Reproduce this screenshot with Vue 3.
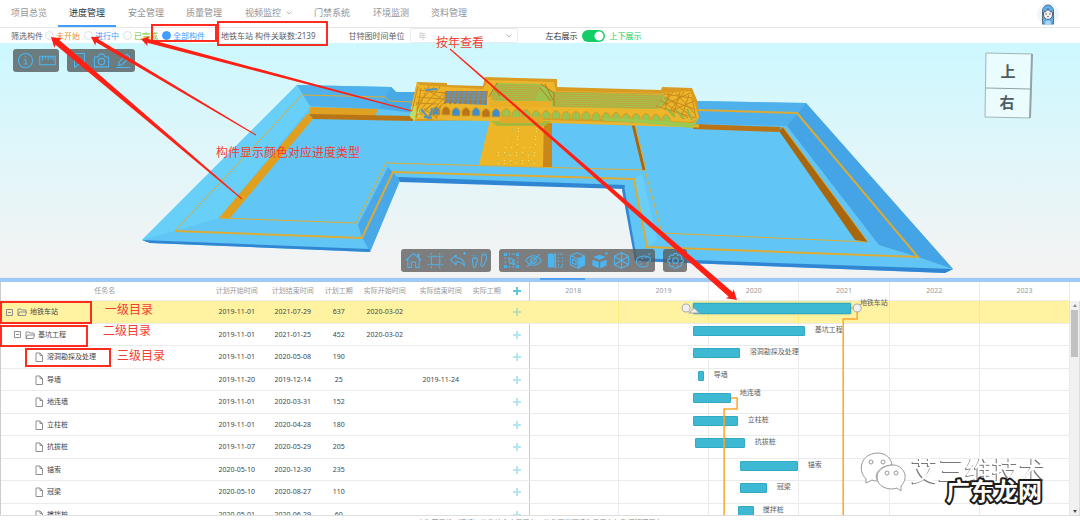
<script setup>
import { ref } from 'vue'

const nav = ['项目总览', '进度管理', '安全管理', '质量管理', '视频监控', '门禁系统', '环境监测', '资料管理']
const states = [
  { id: 'todo', text: '未开始' },
  { id: 'doing', text: '进行中' },
  { id: 'done', text: '已完成' },
  { id: 'all', text: '全部构件' }
]
const state = ref('all')
const unit = ref('年')
const stacked = ref(true)

const years = [2018, 2019, 2020, 2021, 2022, 2023]
const tasks = [
  { name: '地铁车站', level: 0, start: '2019-11-01', end: '2021-07-29', days: 637, real: '2020-03-02', x: 164, w: 158, label: 331 },
  { name: '基坑工程', level: 1, start: '2019-11-01', end: '2021-01-25', days: 452, real: '2020-03-02', x: 164, w: 112, label: 286 },
  { name: '溶洞勘探及处理', level: 2, start: '2019-11-01', end: '2020-05-08', days: 190, x: 164, w: 47, label: 221 },
  { name: '导墙', level: 2, start: '2019-11-20', end: '2019-12-14', days: 25, realEnd: '2019-11-24', x: 169, w: 6, label: 185 },
  { name: '地连墙', level: 2, start: '2019-11-01', end: '2020-03-31', days: 152, x: 164, w: 38, label: 211 },
  { name: '立柱桩', level: 2, start: '2019-11-01', end: '2020-04-28', days: 180, x: 164, w: 45, label: 219 },
  { name: '抗拔桩', level: 2, start: '2019-11-07', end: '2020-05-29', days: 205, x: 166, w: 50, label: 226 },
  { name: '锚索', level: 2, start: '2020-05-10', end: '2020-12-30', days: 235, x: 211, w: 58, label: 279 },
  { name: '冠梁', level: 2, start: '2020-05-10', end: '2020-08-27', days: 110, x: 211, w: 27, label: 248 },
  { name: '搅拌桩', level: 2, start: '2020-05-01', end: '2020-06-29', days: 60, x: 209, w: 16, label: 234 }
]

const icons = {
  info: 'M12 2a10 10 0 1 0 0 20a10 10 0 0 0 0-20M12 6v2M9.500 11h3v6M9 17h6',
  ruler: 'M1 6h22v12h-22zM5 6v6M9 6v4M13 6v6M17 6v4M20 6v6',
  mark: 'M5 2h14v20l-7-6l-7 6z',
  camera: 'M2 7h5l2-4h6l2 4h5v14h-20zM12 9a4.500 4.500 0 1 0 0 9a4.500 4.500 0 0 0 0-9',
  pen: 'M2 22h20M5 19l1-5l11-11l4 4l-11 11zM14 6l4 4',
  home: 'M1 12l11-10l11 10M4 10v12h5v-8h6v8h5v-12M18 7v-4h2v6',
  crop: 'M6 1v3M18 1v3M6 20v3M18 20v3M1 6h3M20 6h3M1 18h3M20 18h3M6 6h12v12h-12z',
  undo: 'M10 4l-8 7l8 7v-4c6-1 9 1 12 6c0-7-4-12-12-12zM20 2h4M22 0v4',
  feet: 'M2 12c0-5 8-5 7 0c0 3-2 4-2 7c0 4-4 4-4 0c0-3-1-4-1-7M15 7c0-5 7-5 7 1c0 4-2 5-4 10c-1 4-5 2-4-1c1-4 1-6 1-10M2 6v-1M5 5v-1M8 6v-1M15 1v1M18 0v1M22 1v1'  ,
  pick: 'M2 2h3v3h-3zM19 2h3v3h-3zM2 19h3v3h-3zM19 19h3v3h-3zM7 3h3M13 3h3M7 21h3M13 21h3M3 7v3M3 13v3M21 7v3M21 13v3M8 8l9 4l-4 1l4 4l-2 1l-3-3l-2 2z',
  hide: 'M1 12c6-9 16-9 22 0c-6 9-16 9-22 0M12 8a4 4 0 1 0 0 8a4 4 0 0 0 0-8M3 21l18-18',
  gear: 'M10 2h4l1 3l3-1l3 3l-1 3l3 1v3l-3 1l1 3l-3 3l-3-1l-1 3h-4l-1-3l-3 1l-3-3l1-3l-3-1v-3l3-1l-1-3l3-3l3 1zM12 8a4 4 0 1 0 0 8a4 4 0 0 0 0-8',
  cube: 'M12 1l10 5v12l-10 5l-10-5v-12zM2 6l10 6l10-6M12 12v11M12 1v11l-10 6M12 12l10 6',
  paint: 'M2 13c0-8 16-10 20-3c1 3-4 2-4 5c0 3 2 5-4 6c-6 1-12-2-12-8M6 13h2M9 9h2M14 8h2M7 17h3M19 4l2-2'
}
const iconFills = {
  split: ['M2 3h8v18h-8z', 'M12 1v22M15 3h2M19 3h3M22 7v2M22 12v2M22 17v2M15 21h2M19 21h3M16 7v2M16 12v2M16 17v2'],
  box: ['M13 10l9-4v12l-9 5z', 'M2 5l10-4l10 5l-9 4v13l-11-5zM13 10l-11-5M5 10l5 2v6l-5-2z'],
  open: ['M2 11l9 3v9l-9-4zM13 14l9-3v8l-9 4zM3 7l9-3l9 3l-9 4z', 'M20 2h4M22 0v4']
}
const topTools = [['info', 'ruler'], ['mark', 'camera', 'pen']]
const bottomTools = [['home', 'crop', 'undo', 'feet'], ['pick', 'hide', 'split', 'box', 'open', 'cube', 'paint'], ['gear']]

// Tapered arrow from a thin tail to a wide head
function arrow(tx, ty, x, y, shaft, head) {
  const len = Math.hypot(x - tx, y - ty)
  const ux = (x - tx) / len
  const uy = (y - ty) / len
  const at = (d, o) => `${(x - ux * d - uy * o).toFixed(1)},${(y - uy * d + ux * o).toFixed(1)}`
  return [at(0, 0), at(head * 1.6, head), at(head * 1.4, shaft), at(len, 0.5), at(len, -0.5), at(head * 1.4, -shaft), at(head * 1.6, -head)].join(' ')
}
const arrows = [
  arrow(242, 199, 51, 37, 3, 6),
  arrow(256, 135, 91, 37, 2, 5),
  arrow(412, 111, 141, 39, 2, 5),
  arrow(450, 49, 737, 300, 3, 6)
]

const arches = Array.from({ length: 24 }, (_, i) => ({ x: 436 + i * 10, y: 106 + Math.round(i * 0.35), c: i < 7 ? (i % 2 ? '#b87518' : '#3d8fcb') : '#98c452' }))
const stripes = Array.from({ length: 9 }, (_, i) => 447 + i * 5)
const beams = Array.from({ length: 8 }, (_, i) => i)
const dots = []
for (let r = 0; r < 10; r++) {
  for (let c = 0; c < 7; c++) {
    if (r > 4 || c === 2 || c === 3 || c === 6) dots.push({ x: 500 + c * 6 - Math.round(r / 4), y: 128 + r * 4 - (r % 2) })
  }
}
</script>

<template>
  <div class="page">
    <header class="top">
      <nav>
        <a v-for="(n, i) in nav" :key="n" href="#" :class="{ active: i === 1 }">{{ n }}<svg v-if="i === 4" class="chev" viewBox="0 0 6 4"><path d="M0.500 0.500l2.500 2.500l2.500-2.500" /></svg></a>
      </nav>
      <button class="avatar" aria-label="用户">
        <svg viewBox="0 0 24 24">
          <circle cx="12" cy="12" r="12" fill="#f0f7fd" />
          <path d="M6 23V9c0-9 12-9 12 0v14z" fill="#62aee8" stroke="#4c6680" />
          <path d="M7 10c2 0 4-1 5-4c1 3 3 4 5 4v2c0 8-10 8-10 0z" fill="#f6f1ee" stroke="#4c5a6c" />
          <path d="M8 24l2-5h4l2 5z" fill="#a9d7fa" /><path d="M9 12h2M13 12h2M11 15h2" stroke="#4c5a6c" />
        </svg>
      </button>
    </header>

    <section class="filters">
      <span>筛选构件</span>
      <div class="radios">
        <label v-for="s in states" :key="s.id" :class="s.id"><input v-model="state" type="radio" name="state" :value="s.id" />{{ s.text }}</label>
      </div>
      <span class="count">地铁车站 构件关联数:2139</span>
      <label class="unit" for="unit">甘特图时间单位</label>
      <div class="select">
        <select id="unit" v-model="unit"><option>年</option><option>月</option></select>
        <svg class="chev" viewBox="0 0 6 4"><path d="M0.500 0.500l2.500 2.500l2.500-2.500" /></svg>
      </div>
      <label class="switch"><b>左右展示</b><input v-model="stacked" type="checkbox" role="switch" /><em>上下展示</em></label>
    </section>

    <section class="viewer">
      <svg class="scene" viewBox="0 43 1080 234" preserveAspectRatio="xMidYMid slice">
        <polygon points="142,240 297,85 391,87 396,92 415,92 700,101 806,103 953,269 945,273 637,261 624,188 400,181 370,252 150,243" fill="#61c6f5" />
        <polygon points="142,240 297,85 311,106 219,218 175,231" fill="#68cff8" />
        <polygon points="297,85 391,87 396,92 415,92 415,113 378,109 310,106" fill="#4fb2ec" />
        <polygon points="391,87 385,97 380,108 415,113 415,92 396,92" fill="#48a9e7" />
        <polygon points="695,101 806,103 787,126 695,124" fill="#4eb1ec" />
        <polygon points="806,103 953,269 918,257 879,245 787,126" fill="#45a4e5" />
        <polygon points="388,167 400,180 370,252 362,237 358,225" fill="#49a8e8" />
        <polygon points="634,179 642,174 657,240 647,247" fill="#69cff8" />
        <g fill="#3186d3">
          <polygon points="142,240 369,249 370,252 150,243" />
          <polygon points="398,177 625,185 624,189 400,182" />
          <polygon points="624,185 637,259 635,261 622,190" />
          <polygon points="635,258 953,269 945,273 635,261" />
        </g>
        <g fill="none" stroke="#dcab35">
          <path d="M412 102l-22-1l-5-4l-83-2l-127 136" /><path d="M175 231l187 7l31-66l241 7l13 68l271 10l-121-144l-100-3" stroke-width="2" />
          <path d="M219 218l137 5l30-60l259 7l17 63l206 9" />
        </g>
        <polygon points="310,107 378,109 375,117 309,114" fill="#e0a122" />
        <polygon points="309,114 413,116 413,121 313,119" fill="#b97515" />
        <polygon points="308,113 313,119 230,218 219,218" fill="#e0a01e" />
        <polygon points="693,124 781,127 779,132 693,129" fill="#b97515" />
        <polygon points="779,131 783,127 868,242 855,240" fill="#a8660f" />
        <path d="M783 127L868 242" stroke="#d9a62e" />
        <path d="M632 120L644 170" stroke="#a8660f" stroke-width="3" /><path d="M634 120L646 170" stroke="#e3ab28" />
        <polygon points="490,120 544,123 543,167 479,165" fill="#edb627" />
        <polygon points="544,122 552,122 552,167 543,167" fill="#c88718" />
        <rect v-for="(d, i) in dots" :key="'d' + i" :x="d.x" :y="d.y" width="1" height="1" :fill="i % 3 ? '#f8df75' : '#aabf55'" />
        <polygon points="417,82 447,83 447,85 483,86 485,77 557,79 557,87 661,90 662,87 692,88 697,100 699,118 693,128 630,122 552,122 544,125 495,123 490,120 415,121 411,108" fill="#d99b20" />
        <polygon points="417,82 420,85 447,87 483,89 488,80 554,82 556,91 661,93 690,91 695,104 699,118 691,122 630,119 415,119 411,108" fill="#edb52a" />
        <polygon points="445,91 487,91 487,105 445,103" fill="#5992bb" />
        <path v-for="s in stripes" :key="s" :d="`M${s} 91l-2 13`" stroke="#b97821" stroke-width="2" />
        <path d="M443 93h44M443 96h44M443 99h44" stroke="#80939d" />
        <polygon points="497,83 541,84 554,92 663,95 670,100 658,109 552,107 550,102 494,101 490,94" fill="#9fc44d" />
        <path v-for="b in beams" :key="'b' + b" :d="`M${497 - b} ${85 + b * 2}l45 1M553 ${92 + b * 2}l${112 - b} 2`" stroke="#c5a23b" />
        <path d="M541 84l13 9l0 13M545 84l8 16M540 88l12 14M490 84l10 12M497 83l-8 14" stroke="#b87719" fill="none" />
        <path d="M490 101h62v6h-62z" fill="#e9af26" />
        <path v-for="a in arches" :key="a.x" :d="`M${a.x - 4} ${a.y + 9}v-5q4-7 8 0v5z`" :fill="a.c" stroke="#d99b20" />
        <path d="M434 118l265 8" stroke="#e9b52f" stroke-width="3" />
        <path d="M604 118l28 1l61 4l6-6l-6 11l-63-6l-26-1z" fill="#9cc94e" />
        <path d="M491 121h60l-6 5h-48z" fill="#a4b83b" /><path d="M500 117h43v6h-43z" fill="#e2a929" />
        <path d="M411 107l5-1l-1 15l-5-4zM414 113l8-5l-3 10z" fill="#bede64" />
        <g fill="none" stroke="#c98a1c">
          <path d="M418 86l-6 25M421 88l-5 30M429 86l-12 24M440 87l-21 25M446 91l-25 24M446 96l-20 22M446 101l-18 16M419 90l26 3M417 97l25 2M416 103l22 1M424 109l13 9M441 105l-5 14M416 116l18-13M434 87l-18 18M424 88l20 12" />
          <path d="M664 94l28 4l4 20M666 97l25 19M676 93l18 20M660 100l28 18M690 93l-26 12M694 101l-23 10M669 92l-4 18M680 92l-7 24M689 95l-8 23M656 106l39 12M664 98l30 11M673 92l-12 16M684 92l-15 20" />
        </g>
        <path d="M421 109l8 10M432 108l-2 10M426 90l11-1M424 117l8 1" stroke="#5196bd" stroke-width="2" />
        <path d="M676 110l8 9M687 109l5 11M666 108l9 9" stroke="#95b747" stroke-width="2" />

        <g class="cube">
          <polygon points="986,53 1032,54 1030,118 985,117" />
          <path d="M986 88L1031 89" /><path d="M1032 54L1030 118" stroke-width="2" />
          <text x="1008" y="77">上</text><text x="1007" y="108">右</text>
        </g>
      </svg>

      <div class="tools upper">
        <div v-for="(g, i) in topTools" :key="i" class="group">
          <button v-for="k in g" :key="k" :aria-label="k"><svg viewBox="0 0 24 24"><path :d="icons[k]" /></svg></button>
        </div>
      </div>
      <div class="tools lower">
        <div v-for="(g, i) in bottomTools" :key="i" class="group">
          <button v-for="k in g" :key="k" :aria-label="k">
            <svg viewBox="0 0 24 24">
              <path v-if="icons[k]" :d="icons[k]" />
              <template v-else><path class="solid" :class="k" :d="iconFills[k][0]" /><path :d="iconFills[k][1]" /></template>
            </svg>
          </button>
        </div>
      </div>
    </section>

    <div class="splitter"><i></i></div>

    <main class="gantt">
      <div class="grid">
        <table>
          <colgroup><col /><col class="date" /><col class="date" /><col class="num" /><col class="date" /><col class="date" /><col class="num" /><col class="add" /></colgroup>
          <thead>
            <tr>
              <th>任务名</th><th>计划开始时间</th><th>计划结束时间</th><th>计划工期</th><th>实际开始时间</th><th>实际结束时间</th><th>实际工期</th>
              <th><button class="plus" aria-label="新增任务"><svg viewBox="0 0 8 8"><path d="M4 0v8M0 4h8" /></svg></button></th>
            </tr>
          </thead>
          <tbody>
            <tr v-for="(t, i) in tasks" :key="i" :class="{ picked: i === 0 }">
              <td>
                <div class="name" :class="'l' + t.level">
                  <svg class="box" viewBox="0 0 7 7"><path v-if="t.level < 2" d="M0.500 0.500h6v6h-6zM2 3.500h3" /></svg>
                  <svg class="node" viewBox="0 0 10 10">
                    <path v-if="t.level < 2" d="M1 8V2h3l1 1h4v2M1 8.500l1.500-3.500h7L8.500 8.500z" />
                    <path v-else d="M2 1h4l2.500 2.500V9.500H2zM6 1v2.500h2.500" />
                  </svg>{{ t.name }}
                </div>
              </td>
              <td>{{ t.start }}</td><td>{{ t.end }}</td><td>{{ t.days }}</td><td>{{ t.real }}</td><td>{{ t.realEnd }}</td><td></td>
              <td><button class="plus" aria-label="新增子任务"><svg viewBox="0 0 8 8"><path d="M4 0v8M0 4h8" /></svg></button></td>
            </tr>
          </tbody>
        </table>
      </div>

      <div class="timeline">
        <div class="years"><span v-for="y in years" :key="y">{{ y }}</span></div>
        <div class="lanes">
          <div v-for="(t, i) in tasks" :key="i" class="lane" :class="{ picked: i === 0 }">
            <span v-for="y in years" :key="y" class="cell"></span>
          </div>
          <template v-for="(t, i) in tasks" :key="'t' + i">
            <i class="bar" :class="{ root: i === 0 }" :style="{ left: t.x / 5.41 + '%', width: t.w / 5.41 + '%', top: Math.ceil(i * 22.5) + 2 + 'px' }"></i>
            <span class="tag" :style="{ left: t.label / 5.41 + '%', top: Math.ceil(i * 22.5) + (i === 0 || i === 4 ? -3 : 1) + 'px' }">{{ t.name }}</span>
          </template>
          <svg class="links" viewBox="0 0 541 214" preserveAspectRatio="xMinYMin slice">
            <path d="M322 7h6v11h-14v196M202 97h6v11h-13v106" />
            <g class="knob"><circle cx="157" cy="7" r="4" /><circle cx="328" cy="7" r="4" /><path d="M160 12l5-5l5 5z" /></g>
          </svg>
        </div>
      </div>
      <div class="scroll"><i class="up"></i><i class="thumb"></i><i class="down"></i></div>
    </main>
    <footer>上海艾三维（建设）软件综合应用平台，软件开发环境为云平台与数据管理平台</footer>

    <svg class="notes" viewBox="0 0 1080 520" preserveAspectRatio="xMinYMin meet">
      <g class="frames">
        <rect x="152" y="25" width="64" height="16" /><rect x="218" y="22" width="109" height="23" />
        <rect x="1" y="302" width="90" height="21" /><rect x="1" y="326" width="86" height="20" /><rect x="26" y="349" width="84" height="17" />
      </g>
      <polygon v-for="a in arrows" :key="a" :points="a" fill="#ff2015" />
      <g class="words">
        <text x="436" y="47">按年查看</text><text x="216" y="157">构件显示颜色对应进度类型</text>
        <text x="105" y="314">一级目录</text><text x="103" y="335">二级目录</text><text x="117" y="360">三级目录</text>
      </g>
      <g class="wechat">
        <path d="M866 479c-9-9-5-25 11-26c9 0 14 5 15 12c-13 1-19 10-14 16q-4 0-6-1l-6 3z" />
        <path d="M893 465c-9 0-16 6-16 12c0 10 12 14 20 11l4 3v-5c9-9 2-21-8-21z" />
        <g><circle cx="871" cy="462" r="2" /><circle cx="883" cy="462" r="2" /><circle cx="887" cy="473" r="2" /><circle cx="896" cy="473" r="2" /></g>
      </g>
      <text class="mark" x="911" y="481">艾三维技术</text>
      <text class="site" x="946" y="500">广东龙网</text>
    </svg>
  </div>
</template>

<style>
body { background: #fff; overflow: hidden; }
</style>

<style scoped>
* { box-sizing: border-box; }
.page { position: relative; display: flex; flex-direction: column; height: 100vh; overflow: hidden; font-family: "Noto Sans", "Noto Sans CJK SC", sans-serif; font-size: 8px; line-height: 12px; color: #606266; }
button { border: 0; padding: 0; background: none; display: grid; place-items: center; cursor: pointer; }
.top { display: flex; justify-content: space-between; height: 28px; flex: none; border-bottom: 1px solid #e6e6e6; }
nav { display: flex; }
nav a { display: flex; align-items: center; gap: 5px; padding: 0 11px; font-size: 9px; color: #909399; text-decoration: none; border-bottom: 2px solid transparent; border-top: 1px solid transparent; }
nav a:nth-child(even) { margin-right: 1px; }
nav a.active { color: #303133; border-bottom-color: #409eff; }
.chev { width: 6px; height: 4px; fill: none; stroke: #b4b8c0; }
.avatar { width: 24px; margin-right: 20px; }
.avatar svg { width: 22px; height: 22px; }

.filters { display: flex; align-items: center; height: 15px; flex: none; padding-left: 11px; white-space: nowrap; }
.radios { display: flex; gap: 4px; margin-left: 2px; }
.radios label { display: flex; align-items: center; gap: 2px; color: #409eff; }
.radios .todo { color: #e6953c; }
.radios .done { color: #67c23a; }
.radios input { appearance: none; width: 9px; height: 9px; margin: 0; border: 1px solid #dcdfe6; border-radius: 50%; background: #fff; }
.radios input:checked { background: #409eff; border-color: #409eff; }
.count { margin-left: 16px; }
.unit { margin-left: 33px; }
.select { position: relative; width: 108px; margin-left: 5px; }
.select select { appearance: none; display: block; width: 100%; height: 15px; padding: 0 8px; border: 1px solid #e8ebf1; border-radius: 2px; background: #fff; font: inherit; color: #c0c4cc; opacity: 1; }
.select .chev { position: absolute; right: 6px; top: 6px; }
.switch { display: flex; align-items: center; margin-left: 28px; }
.switch b { font-weight: 400; color: #303133; }
.switch em { font-style: normal; color: #13ce66; }
.switch input { appearance: none; width: 23px; height: 12px; margin: 0 5px 0 4px; border-radius: 6px; background: radial-gradient(circle at 17px 6px, #fff 4px, #13ce66 5px); }
.switch input:not(:checked) { background: radial-gradient(circle at 6px 6px, #fff 4px, #c0ccda 5px); }

.viewer { position: relative; height: 45vh; flex: none; background: linear-gradient(#ccf8fe, #dff6fa 45%, #f3f3f3 95%); }
.scene { display: block; width: 100%; height: 100%; }
.cube polygon { fill: #f0fcfe; fill-opacity: 0.8; stroke: #a3b4b8; }
.cube path { stroke: #93a3a6; }
.cube text { font: 700 15px "Noto Sans CJK SC", sans-serif; fill: #4d5d61; text-anchor: middle; }
.tools { position: absolute; display: flex; gap: 8px; }
.upper { left: 13px; top: 6px; }
.lower { left: 8px; right: 0; bottom: 5px; justify-content: center; }
.group { display: flex; height: 23px; padding: 0 1px; border-radius: 3px; background: rgba(82, 92, 94, 0.8); }
.lower .group { background: rgba(86, 86, 86, 0.75); }
.group button { width: 22px; }
.group svg { width: 17px; height: 17px; fill: none; stroke: #4bb5f2; stroke-width: 1.5; stroke-linejoin: round; overflow: visible; }
.group .solid { fill: #4bb5f2; }
.group .open { stroke: none; }

.splitter { height: 5px; flex: none; background: #9fc9f6; border-top: 1px solid #eee; display: flex; justify-content: center; }
.splitter i { width: 45px; height: 2px; margin-left: 45px; background: #4f9ff3; }

.gantt { display: flex; flex: 1; min-height: 0; overflow: hidden; font-size: 7px; line-height: 10px; border-left: 1px solid #ccc; }
.grid { width: 49%; flex: none; margin-right: -1px; border-right: 1px solid #ccc; position: relative; }
table { width: 100%; table-layout: fixed; border-collapse: separate; border-spacing: 0; }
col.date { width: 56px; }
col.num { width: 36px; }
col.add { width: 24px; }
th, td { height: 22px; padding: 0; text-align: center; white-space: nowrap; border-bottom: 1px solid #ebebeb; color: #454545; }
th { height: 19px; font-weight: 400; color: #999; }
tbody tr:nth-child(odd) td { height: 23px; }
.picked td, .lane.picked { background: #fff3a1; }
.plus { width: 100%; }
.plus svg { width: 8px; height: 8px; stroke: #b5e5ee; stroke-width: 2; }
th .plus svg { stroke: #5ac7dd; }
.picked .plus svg { stroke: #b8dfb6; }
.name { display: flex; align-items: center; padding-left: 5px; }
.name.l1 { padding-left: 13px; }
.name.l2 { padding-left: 22px; }
.name svg { fill: none; stroke: #8f8f8f; }
.name .box { width: 7px; height: 7px; margin-right: 4px; }
.name .node { width: 10px; height: 10px; margin-right: 3px; }

.timeline { flex: 1; min-width: 0; }
.years { display: grid; grid-template-columns: repeat(6, 1fr); height: 19px; border-bottom: 1px solid #ebebeb; }
.years span { display: grid; place-items: center; color: #999; border-right: 1px solid #ebebeb; }
.lanes { position: relative; }
.lane { display: grid; grid-template-columns: repeat(6, 1fr); height: 23px; border-bottom: 1px solid #ebebeb; }
.lane:nth-child(even) { height: 22px; }
.cell { border-right: 1px solid #ebebeb; }
.picked .cell { border-color: #ffe97d; }
.bar { position: absolute; height: 10px; background: #3db9d3; border: 1px solid #31a9c3; border-radius: 1px; }
.bar.root { height: 11px; box-shadow: 0 0 2px #299cb4; }
.tag { position: absolute; white-space: nowrap; color: #606060; }
.links { position: absolute; left: 0; top: 0; width: 100%; height: 214px; fill: none; stroke: #ffa528; stroke-width: 1.5; }
.knob { fill: #f0f0f0; stroke: #aaa; stroke-width: 1; }
.scroll { width: 10px; flex: none; margin-top: 19px; background: #f1f1f1; border-right: 1px solid #ddd; display: flex; flex-direction: column; align-items: center; }
.scroll .thumb { width: 7px; height: 47px; background: #c1c1c1; margin-top: 3px; }
.scroll .up, .scroll .down { border: 2px solid transparent; }
.scroll .up { margin-top: 3px; border-top: 0; border-bottom: 3px solid #8b8b8b; }
.scroll .down { margin-top: auto; margin-bottom: 2px; border-bottom: 0; border-top: 3px solid #505050; }
footer { height: 5px; flex: none; padding-top: 2px; border-top: 1px solid #ddd; overflow: hidden; text-align: center; font-size: 7px; line-height: 9px; color: #888; }

.notes { position: absolute; left: 0; top: 0; width: 100%; height: 100%; pointer-events: none; }
.frames { fill: none; stroke: #ff2a20; stroke-width: 2; }
.words { font: 12px "Noto Sans CJK SC", sans-serif; fill: #f53c30; }
.wechat { fill: #fff; stroke: #999; }
.mark { font: 27px "Noto Sans CJK SC", sans-serif; fill: #fff; filter: drop-shadow(-1px 1px 0 #777); }
.site { font: 700 24px "Noto Sans CJK SC", sans-serif; fill: #fff; stroke: #1d1d1d; stroke-width: 4; stroke-linejoin: round; paint-order: stroke; }
</style>
